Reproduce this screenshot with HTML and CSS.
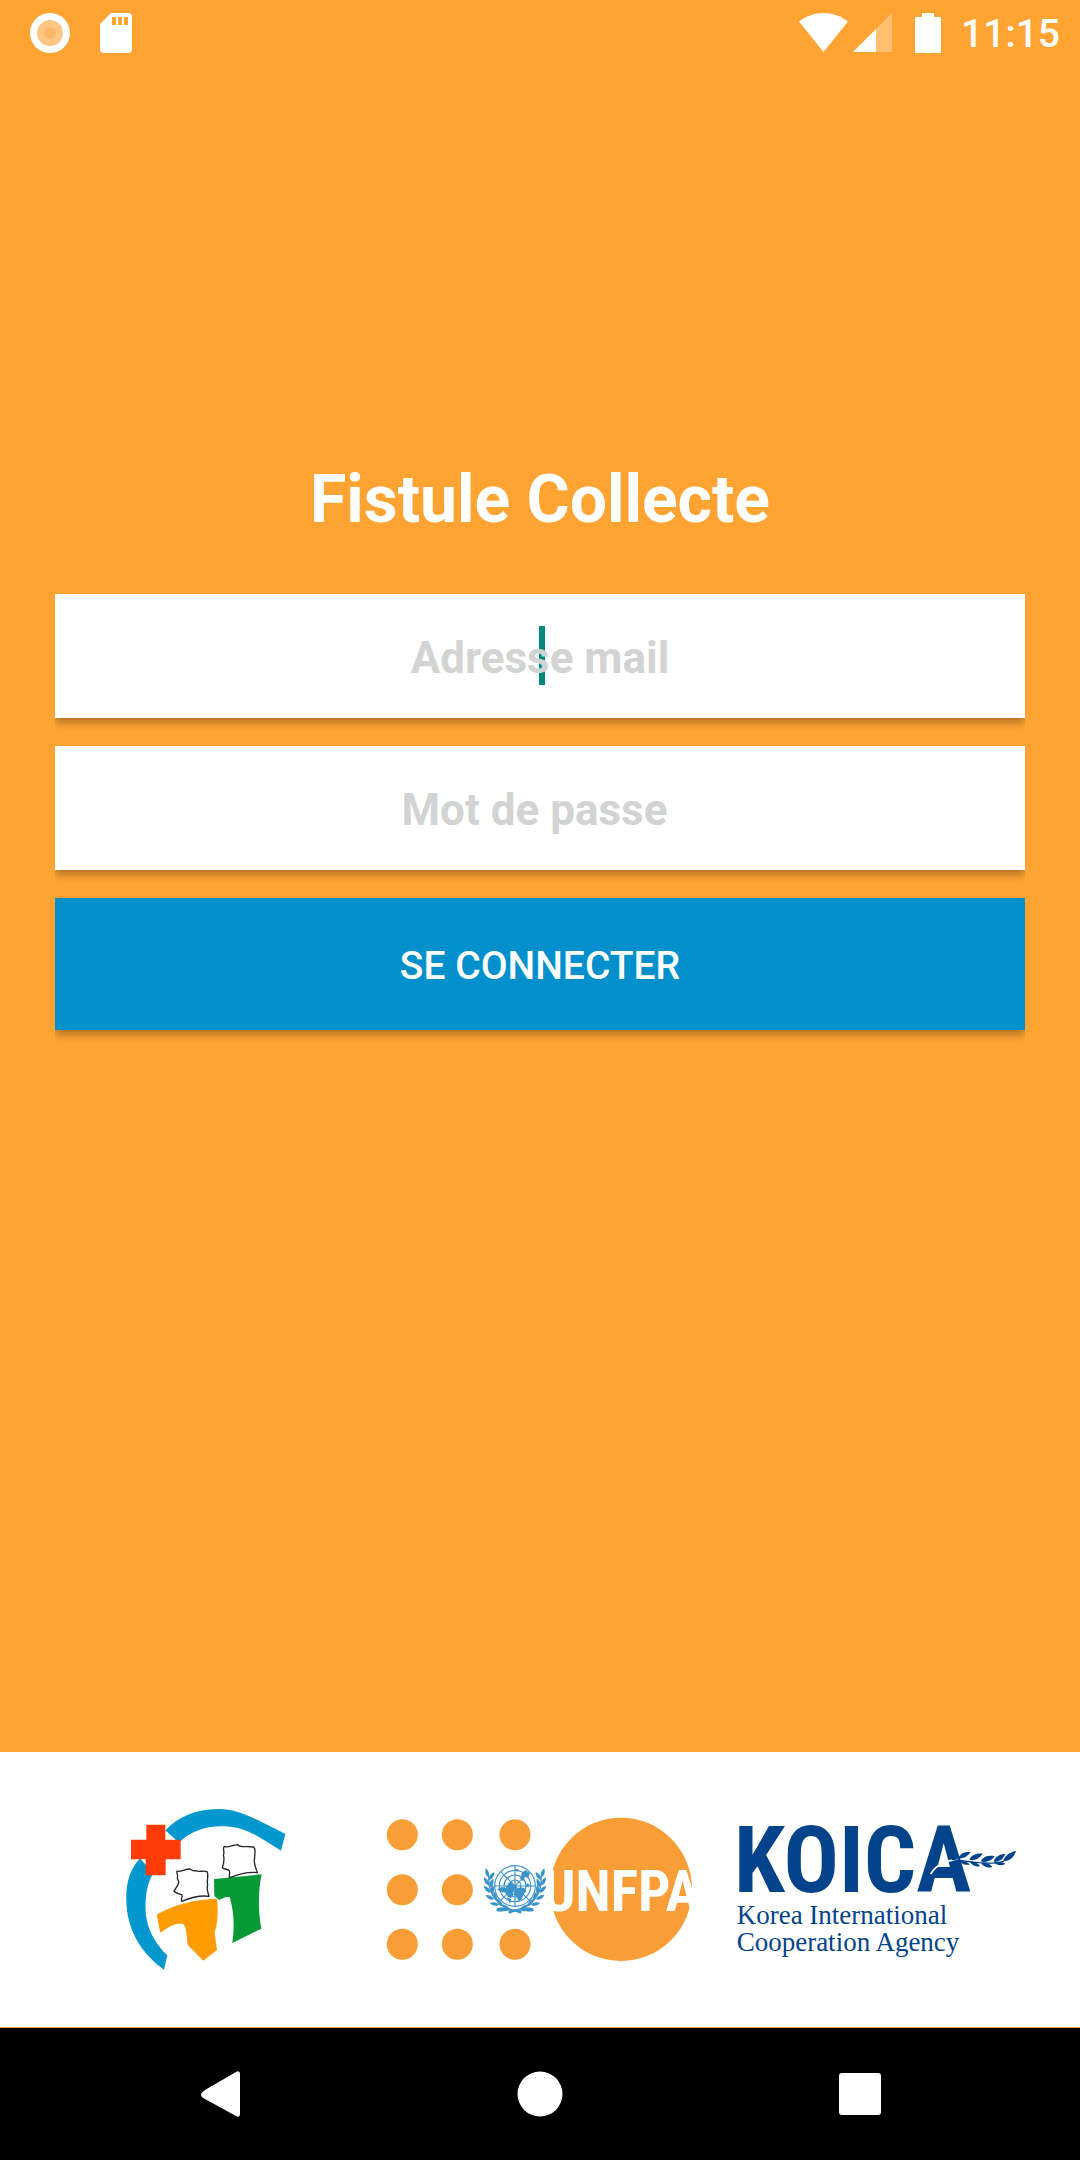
FILE: index.html
```html
<!DOCTYPE html>
<html lang="fr">
<head>
<meta charset="utf-8">
<meta name="viewport" content="width=device-width, initial-scale=1">
<title>Fistule Collecte</title>
<link rel="stylesheet" href="styles.css">
</head>
<body>
<header class="status">
  <div class="status-group">
    <svg class="icon" viewBox="0 0 44 44" width="44" height="44" aria-hidden="true">
      <circle cx="22" cy="22" r="20" fill="#fff"/>
      <circle cx="22" cy="22" r="13" fill="#fdc685"/>
      <circle cx="22" cy="22" r="6" fill="#fdb866"/>
    </svg>
    <svg class="icon" viewBox="0 0 44 44" width="44" height="44" aria-hidden="true">
      <path fill="#fff" fill-rule="evenodd" d="M17 2h17a4 4 0 0 1 4 4v32a4 4 0 0 1-4 4H10a4 4 0 0 1-4-4V13zM18 6v8h4V6zM24 6v8h4V6zM30 6v8h4V6z"/>
    </svg>
  </div>
  <div class="status-group status-right">
    <svg class="icon" viewBox="0 0 50 44" width="50" height="44" aria-hidden="true">
      <path fill="#fff" d="M0 10.500C15-1 34-1 49 10.500L24.500 41z"/>
    </svg>
    <svg class="icon" viewBox="0 0 40 44" width="40" height="44" aria-hidden="true">
      <path fill="#fff" fill-opacity=".3" d="M39 2v39H0z"/>
      <path fill="#fff" d="M23 18v23H0z"/>
    </svg>
    <svg class="icon battery" viewBox="0 0 26 44" width="26" height="44" aria-hidden="true">
      <path fill="#fff" d="M7 2h12v4h7v36H0V6h7z"/>
    </svg>
    <time class="clock">11:15</time>
  </div>
</header>

<main class="login">
  <h1 class="title">Fistule Collecte</h1>
  <form class="form">
    <div class="field">
      <span class="caret"></span>
      <input class="input" type="email" placeholder="Adresse mail" aria-label="Adresse mail">
    </div>
    <div class="field">
      <input class="input" type="password" placeholder="Mot de passe " aria-label="Mot de passe">
    </div>
    <button class="submit" type="submit">SE CONNECTER</button>
  </form>
</main>

<footer class="partners">
  <svg class="logo" viewBox="0 0 570 600" width="190" height="200" role="img" aria-label="Ministère de la Santé">
    <path fill="#0598cf" d="M166 121C205 80 255 58 325 57C385 56 440 88 526 132L513 182C455 146 410 110 340 109C285 108 240 125 207 158zM90 205C50 250 46 300 50 350C56 425 95 490 162 539L172 496C115 440 104 385 107 335C109 300 115 275 130 250z"/>
    <path fill="#ff3b06" d="M109 104h57v45h46v59h-45v48h-60v-48H63v-59h46z"/>
    <path fill="#ff9c05" d="M140 374C190 345 250 328 321 326C325 365 324 395 314 428L321 480L280 512L234 466C228 440 232 418 220 402C200 396 180 408 151 428z"/>
    <path fill="#079a35" d="M312 267L455 253C444 305 444 360 454 416L367 459C374 410 372 365 359 322C345 318 340 326 327 330L313 318z"/>
    <g fill="#fff" stroke="#25232b" stroke-width="4" stroke-linejoin="round">
      <path d="M201 243c10 5 22-6 40-6c6 3 8 8 16 5c12 6 22-2 34 3c8 12-3 24 2 39c-4 12 1 24 4 35c-26-4-55 4-82 15c-4-10 5-10 0-20c-10-2-14-4-23-10c10-20 20-24 10-38c4-12-4-16-1-23z"/>
      <path d="M343 169c12 6 20-4 40-5c10 10 22 4 48 7c8 8 2 22 3 33c-5 16 4 30 8 44c-25-3-55 4-83 15c-4-10 4-12-2-22c-8-4-14-3-20-8c4-12 8-24 3-38c6-10-4-18 3-26z"/>
    </g>
  </svg>

  <svg class="logo" viewBox="0 0 1020 540" width="340" height="180" role="img" aria-label="UNFPA">
    <defs>
      <path id="leaf" d="M0 0C-9-6-10-17-5-28C3-20 5-8 0 0z"/>
      <g id="branch" fill="#3a93cb">
        <path d="M453 334C395 330 350 290 357 226" fill="none" stroke="#3a93cb" stroke-width="4"/>
        <use href="#leaf" transform="translate(356 232) rotate(-8)"/>
        <use href="#leaf" transform="translate(358 240) rotate(42)"/>
        <use href="#leaf" transform="translate(357 256) rotate(-22)"/>
        <use href="#leaf" transform="translate(360 262) rotate(30)"/>
        <use href="#leaf" transform="translate(362 278) rotate(-36)"/>
        <use href="#leaf" transform="translate(367 282) rotate(12)"/>
        <use href="#leaf" transform="translate(372 298) rotate(-54)"/>
        <use href="#leaf" transform="translate(379 302) rotate(-6)"/>
        <use href="#leaf" transform="translate(387 314) rotate(-70)"/>
        <use href="#leaf" transform="translate(397 319) rotate(-26)"/>
        <use href="#leaf" transform="translate(406 326) rotate(-92)"/>
        <use href="#leaf" transform="translate(420 329) rotate(-48)"/>
        <path d="M378 327c12-7 30-5 46 2c-16 7-32 7-46-2zM414 336c10-9 24-9 39-5c-12 3-24 5-34 10z"/>
      </g>
    </defs>
    <g fill="#f99d36">
      <circle cx="97" cy="104" r="46.500"/><circle cx="262" cy="104" r="46.500"/><circle cx="435" cy="104" r="46.500"/>
      <circle cx="97" cy="269" r="46.500"/><circle cx="262" cy="269" r="46.500"/>
      <circle cx="97" cy="433" r="46.500"/><circle cx="262" cy="433" r="46.500"/><circle cx="435" cy="433" r="46.500"/>
      <ellipse cx="753" cy="268" rx="213" ry="215"/>
    </g>
    <text class="unfpa" x="754" y="332" text-anchor="middle">UNFPA</text>
    <use href="#branch"/>
    <use href="#branch" transform="matrix(-1 0 0 1 870 0)"/>
    <g fill="none" stroke="#3a93cb" stroke-width="3.500">
      <circle cx="435" cy="258" r="61" fill="#fff"/>
      <circle cx="435" cy="258" r="47"/>
      <circle cx="435" cy="258" r="33"/>
      <circle cx="435" cy="258" r="18"/>
      <path d="M435 197v122M374 258h122M392 215l86 86M478 215l-86 86"/>
    </g>
    <path fill="#3a93cb" d="M381 268l14-7l12 3l8-14l12-4l2 10l10 2l-2 12l-10 4l4 10l-8 10l-10-4l-4-12l-14-2zM437 266l14-4l12 2l6 10l-8 8l-6 16l-10 6l-4-12l-10-8l4-12zM450 236l6-18l10-8l14 10l-6 14l-10-4l-4 14zM434 206l12 2l-4 8zM470 250l8 2l-2 10l-8-2zM410 292l14 6l-4 14z"/>
  </svg>

  <svg class="logo" viewBox="0 0 924 540" width="308" height="180" role="img" aria-label="KOICA">
    <g fill="#03438c">
      <text class="koica" x="36" y="276">KOICA</text>
      <text class="agency" x="44" y="372">Korea International</text>
      <text class="agency" x="44" y="453">Cooperation Agency</text>
    </g>
    <path d="M626 222C644 192 672 181 708 179" fill="none" stroke="#fff" stroke-width="5"/>
    <g fill="#03438c">
      <path d="M690 176C750 183 800 194 846 182L846 185C800 198 750 188 690 181z"/>
      <path d="M708 175C716 158 730 155 746 156C736 171 724 177 708 175zM712 182C725 182 738 186 744 194C730 196 718 192 712 182zM742 179C750 163 766 160 782 161C772 176 758 183 742 179zM744 185C758 184 770 190 774 199C760 200 748 195 744 185zM776 184C784 169 800 165 818 169C808 183 792 189 776 184zM778 189C792 187 808 193 811 202C796 204 782 199 778 189zM815 186C818 171 832 162 850 161C845 176 834 185 815 186zM816 187C828 183 844 186 850 192C838 198 824 197 816 187zM844 184C846 168 862 158 882 152C877 171 864 183 844 184z"/>
    </g>
  </svg>
</footer>

<nav class="navbar">
  <button class="nav-button" type="button" aria-label="Retour">
    <svg class="icon" viewBox="0 0 48 48" width="48" height="48"><path fill="#fff" d="M9 20L40 2q4-2 4 2v40q0 4-4 2L9 29q-8-4 0-9z"/></svg>
  </button>
  <button class="nav-button" type="button" aria-label="Accueil">
    <svg class="icon" viewBox="0 0 48 48" width="48" height="48"><circle cx="24" cy="24" r="22.500" fill="#fff"/></svg>
  </button>
  <button class="nav-button" type="button" aria-label="Applications récentes">
    <svg class="icon" viewBox="0 0 48 48" width="48" height="48"><rect x="3" y="3" width="42" height="42" rx="3" fill="#fff"/></svg>
  </button>
</nav>
</body>
</html>
```
FILE: styles.css
```css
* {
  box-sizing: border-box;
}

body {
  display: flex;
  flex-direction: column;
  min-height: 100vh;
  margin: 0;
  background: #ffa333;
  color: #fff;
  font-family: Roboto, "Liberation Sans", sans-serif;
}

.icon,
.logo {
  display: block;
}

.status {
  display: flex;
  justify-content: space-between;
  align-items: center;
  height: 66px;
  padding: 0 20px 0 28px;
}

.status-group {
  display: flex;
  align-items: center;
  gap: 22px;
}

.status-right {
  gap: 4px;
}

.battery {
  margin: 0 16px 0 18px;
}

.clock {
  padding-top: 2px;
  font-size: 39px;
  font-weight: 500;
  line-height: 44px;
}

.login {
  flex: 1;
  padding: 394px 55px 56px;
}

.title {
  margin: 0 0 54px;
  font-size: 66px;
  font-weight: 700;
  line-height: 80px;
  text-align: center;
}

.form {
  display: flex;
  flex-direction: column;
  gap: 28px;
}

.field,
.submit {
  box-shadow: 0 5px 8px rgba(0, 0, 0, 0.3);
  clip-path: inset(-8px 0 -24px);
}

.field {
  position: relative;
  background: #fff;
}

.caret {
  position: absolute;
  top: 32px;
  left: calc(50% - 1px);
  width: 6px;
  height: 59px;
  background: #00897b;
}

.input {
  position: relative;
  display: block;
  width: 100%;
  height: 124px;
  padding: 4px 0 0;
  border: 0;
  outline: 0;
  background: transparent;
  color: #333;
  font: 700 44px Roboto, "Liberation Sans", sans-serif;
  text-align: center;
}

.input::placeholder {
  color: #d3d3d3;
  opacity: 1;
  white-space: pre;
}

.submit {
  height: 132px;
  padding: 4px 0 0;
  border: 0;
  background: #0290cc;
  color: #fff;
  font: 500 39px Roboto, "Liberation Sans", sans-serif;
}

.partners {
  display: grid;
  grid-template-columns: repeat(3, 1fr);
  place-items: center;
  height: 275px;
  padding: 0 39px;
  background: #fff;
}

.unfpa {
  fill: #fff;
  font: 700 172px "Roboto Condensed", "Liberation Sans Narrow", sans-serif;
}

.koica {
  font: 700 276px "Roboto Condensed", "Liberation Sans Narrow", sans-serif;
}

.agency {
  font: 400 81px "Liberation Serif", serif;
}

.navbar {
  display: grid;
  grid-template-columns: repeat(3, 1fr);
  height: 132px;
  margin-top: 1px;
  padding: 0 60px;
  background: #000;
}

.nav-button {
  display: grid;
  place-items: center;
  padding: 0;
  border: 0;
  background: none;
}
```
